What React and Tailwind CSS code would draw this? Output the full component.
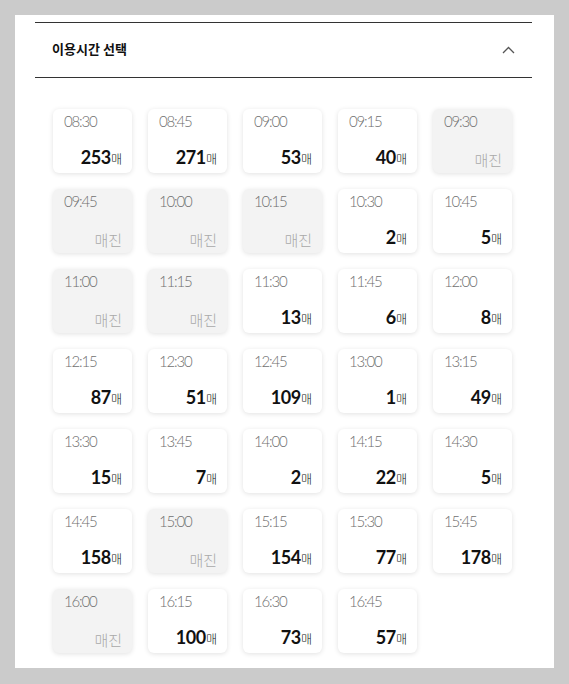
const slots = [
  ['08:30', 253], ['08:45', 271], ['09:00', 53], ['09:15', 40], ['09:30', null],
  ['09:45', null], ['10:00', null], ['10:15', null], ['10:30', 2], ['10:45', 5],
  ['11:00', null], ['11:15', null], ['11:30', 13], ['11:45', 6], ['12:00', 8],
  ['12:15', 87], ['12:30', 51], ['12:45', 109], ['13:00', 1], ['13:15', 49],
  ['13:30', 15], ['13:45', 7], ['14:00', 2], ['14:15', 22], ['14:30', 5],
  ['14:45', 158], ['15:00', null], ['15:15', 154], ['15:30', 77], ['15:45', 178],
  ['16:00', null], ['16:15', 100], ['16:30', 73], ['16:45', 57],
]

function Slot({ time, count }) {
  const soldOut = count === null
  return (
    <button
      type="button"
      className={`flex h-[64px] w-[79px] flex-col justify-between rounded-[6px] pb-[3px] pl-[11px] pr-[10px] pt-[2px] text-left shadow-[0_1px_5px_rgba(0,0,0,0.12)] ${soldOut ? 'bg-[#f3f3f3]' : 'bg-white'}`}
    >
      <span className="text-[15px] font-light leading-[20px] tracking-[-0.08em] text-[#707070]">{time}</span>
      {soldOut ? (
        <span className="self-end text-[15px] font-light leading-[20px] text-[#a9a9a9]">매진</span>
      ) : (
        <span className="flex items-baseline self-end leading-[20px] text-[#111]">
          <span className="text-[18px] font-bold tracking-[-0.02em]">{count}</span>
          <span className="text-[12px] font-light">매</span>
        </span>
      )}
    </button>
  )
}

export default function App() {
  return (
    <div className="min-h-[684px] bg-[#cbcbcb] px-[15px] pt-[15px] font-['Lato','Noto_Sans_CJK_KR',sans-serif]">
      <div className="bg-white pb-[15px] pl-[20px] pr-[22px] pt-[7px]">
        <div className="flex h-[56px] items-center justify-between border-y border-[#333] pl-[17px] pr-[17px]">
          <h2 className="text-[13px] font-bold text-[#111]">이용시간 선택</h2>
          <svg width="13" height="8" viewBox="0 0 13 8" fill="none" stroke="#555" strokeWidth="1.3">
            <path d="M1 7 L6.5 1.5 L12 7" />
          </svg>
        </div>
        <div className="grid grid-cols-[repeat(5,79px)] gap-x-[16px] gap-y-[16px] pl-[18px] pt-[31px]">
          {slots.map(([time, count]) => (
            <Slot key={time} time={time} count={count} />
          ))}
        </div>
      </div>
    </div>
  )
}
